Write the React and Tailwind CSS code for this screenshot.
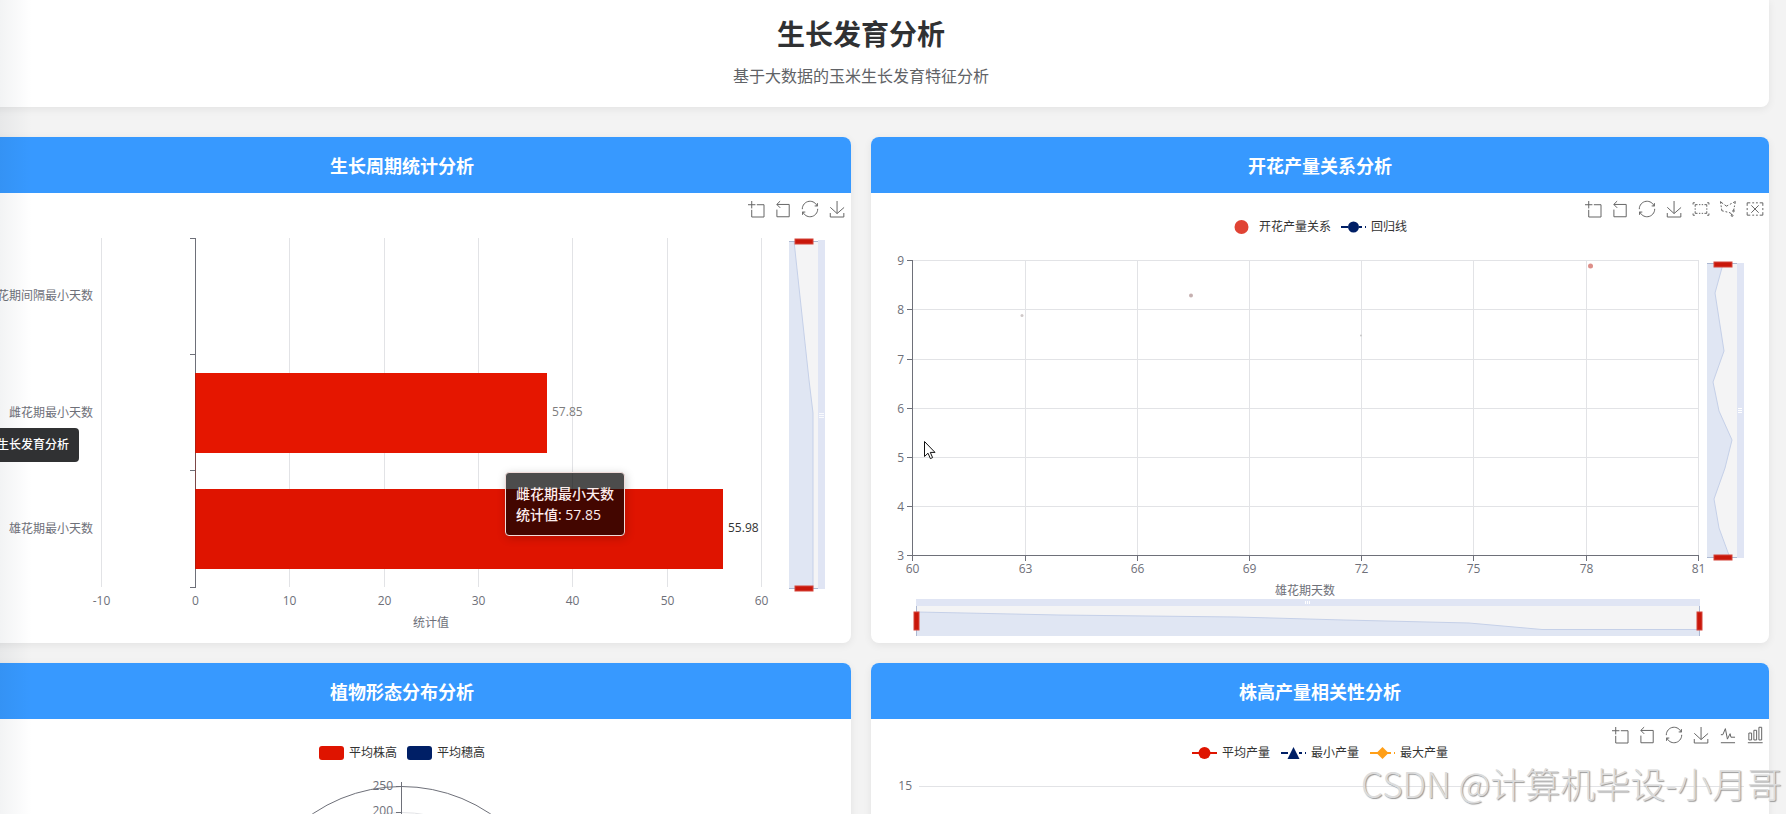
import React from 'react';

const FONT = 'font-["Open_Sans","Noto_Sans_CJK_SC",sans-serif]';

// Toolbox glyphs: viewBox + path
const TOOLS = {
  zoom: { label: '区域缩放', box: '0 0 58 58', d: 'M0,13.5h26.9 M13.5,26.9V0 M32.1,13.5H58V58H13.5 V32.1' },
  back: { label: '区域缩放还原', box: '3.4 1 58 58', d: 'M22,1.4L9.9,13.5l12.3,12.3 M10.3,13.5H54.9v44.6 H10.3v-26' },
  restore: { label: '还原', box: '1 1 58 58', d: 'M3.8,33.4 M47,18.9h9.8V8.7 M56.3,20.1 C52.1,9,40.5,0.6,26.8,2.1C12.6,3.7,1.6,16.2,2.1,30.6 M13,41.1H3.1v10.2 M3.7,39.9c4.2,11.1,15.8,19.5,29.5,18 c14.2-1.6,25.2-14.1,24.7-28.5' },
  save: { label: '保存为图片', box: '0 0 58 58', d: 'M4.7,22.9L29.3,45.5L54.7,23.4M4.6,43.6L4.6,58L53.8,58L53.8,43.6M29.2,45.1L29.2,0' },
  rect: { label: '矩形选择', box: '0 -0.2 90 70.4', d: 'M0.4,10V-0.2h9.8 M89.6,10V-0.2h-9.8 M0.4,60v10.2h9.8 M89.6,60v10.2h-9.8 M12.3,22.4V10.5h13.1 M33.6,10.5h7.8 M49.1,10.5h7.8 M77.5,22.4V10.5h-13 M12.3,31.1v8.2 M77.7,31.1v8.2 M12.3,47.6v11.9h13.1 M33.6,59.5h7.6 M49.1,59.5 h7.7 M77.5,47.6v11.9h-13' },
  polygon: { label: '圈选', box: '8 3 56 56', d: 'M55.2,34.9c1.7,0,3.1,1.4,3.1,3.1s-1.4,3.1-3.1,3.1 s-3.1-1.4-3.1-3.1S53.5,34.9,55.2,34.9z M50.4,51c1.7,0,3.1,1.4,3.1,3.1c0,1.7-1.4,3.1-3.1,3.1c-1.7,0-3.1-1.4-3.1-3.1 C47.3,52.4,48.7,51,50.4,51z M55.6,37.1l1.5-7.8 M60.1,13.5l1.6-8.7l-7.8,4 M59,19l-1,5.3 M24,16.1l6.4,4.9l6.4-3.3 M48.5,11.6 l-5.9,3.1 M19.1,12.8L9.7,5.1l1.1,7.7 M13.4,29.8l1,7.3l6.6,1.6 M11.6,18.4l1,6.1 M26.6,40.4 M27.3,40.2l6.1,1.6 M49.9,52.1l-5.6-7.6l-4.9-1.2' },
  clear: { label: '清除选择', box: '4 -1 67 62', d: 'M22,14.7l30.9,31 M52.9,14.7L22,45.7 M4.7,16.8V4.2h13.1 M26,4.2h7.8 M41.6,4.2h7.8 M70.3,16.8V4.2H57.2 M4.7,25.9v8.6 M70.3,25.9v8.6 M4.7,43.2v12.6h13.1 M26,55.8h7.8 M41.6,55.8h7.8 M70.3,43.2v12.6H57.2' },
  line: { label: '切换为折线图', box: '1 1 58 58', d: 'M4.1,28.9h7.1l9.3-22l7.4,38l9.7-19.7l3,12.8h14.9M4.1,58h51.4' },
  bar: { label: '切换为柱状图', box: '0 1 58 58', d: 'M6.7,22.9h10V48h-10V22.9zM24.9,13h10v35h-10V13zM43.2,2h10v46h-10V2zM3.1,58h53.7' },
};

const Toolbox = ({ items }) => (
  <div className="absolute top-2 right-1.5 flex gap-[11px]">
    {items.map(key => (
      <button key={key} type="button" aria-label={TOOLS[key].label} className="block">
        <svg viewBox={TOOLS[key].box} className="block w-4 h-4 overflow-visible" fill="none" stroke="#666">
          <path d={TOOLS[key].d} vectorEffect="non-scaling-stroke" />
        </svg>
      </button>
    ))}
  </div>
);

const Legend = ({ items, className }) => (
  <div className={`absolute inset-x-0 top-[26px] flex justify-center ${className}`}>
    {items.map(({ name, icon }) => (
      <button key={name} type="button" className="flex items-center gap-[5px] text-xs leading-4 text-[#333] whitespace-nowrap">
        <svg width="25" height="14" viewBox="0 0 25 14">{icon}</svg>
        {name}
      </button>
    ))}
  </div>
);

const Card = ({ title, children }) => (
  <section className="bg-white rounded-lg overflow-hidden shadow-[0_2px_8px_rgba(0,0,0,0.07)]">
    <h2 className="bg-[#3799ff] text-white text-lg font-bold leading-6 pt-[17px] pb-[15px] text-center">{title}</h2>
    <div className="relative">{children}</div>
  </section>
);

const Chart = ({ children, label }) => (
  <svg viewBox="0 0 898 450" role="img" aria-label={label} className="block w-full" fontSize="12" fill="#6E7079">
    {children}
  </svg>
);

const Handle = ({ x, y, vertical }) => (
  <rect x={x} y={y} width={vertical ? 5 : 18} height={vertical ? 18 : 5} fill="#c9170a" stroke="#d4443a" strokeWidth="1" />
);

const GrowthCycle = () => {
  const xTicks = [[-10, 148.5], [0, 242.5], [10, 336.5], [20, 431.5], [30, 525.5], [40, 619.5], [50, 714.5], [60, 808.5]];
  const rows = [['雌雄花期间隔最小天数', 107], ['雌花期最小天数', 224], ['雄花期最小天数', 340]];
  return (
    <>
      <Chart label="生长周期统计分析">
        {xTicks.map(([v, x]) => (
          <g key={v}>
            <line x1={x} x2={x} y1="45" y2="394" stroke={v === 0 ? '#6E7079' : '#e2e3e6'} />
            <text x={x} y="412" textAnchor="middle">{v}</text>
          </g>
        ))}
        {[45.5, 161.5, 277.5, 394.5].map(y => <line key={y} x1="237" x2="243" y1={y} y2={y} stroke="#6E7079" />)}
        {rows.map(([name, y]) => <text key={name} x="140" y={y} textAnchor="end">{name}</text>)}
        <rect x="242" y="180" width="352" height="80" fill="#e51600" />
        <rect x="242" y="296" width="528" height="80" fill="#df1400" />
        <line x1="242.5" x2="242.5" y1="180" y2="376" stroke="#8a2015" strokeOpacity="0.5" />
        <text x="599" y="223" fill="#7d7d7d">57.85</text>
        <text x="775" y="339" fill="#333">55.98</text>
        <text x="478" y="434" textAnchor="middle">统计值</text>

        {/* Data zoom */}
        <rect x="836" y="48" width="29" height="348" fill="#f4f4f5" />
        <path d="M836,48 H841 L856,187 L860,220 V396 H836 Z" fill="#e0e6f3" />
        <path d="M841,48 L856,187 L860,220 V396" fill="none" stroke="#c5d0e8" />
        <rect x="865" y="47" width="7" height="349" fill="#e0e5f4" />
        <path d="M866,220.5h5 M866,222.5h5 M866,224.5h5" stroke="#fff" strokeWidth="1" strokeOpacity="0.8" />
        <path d="M836,48.5h29 M836,395.5h29" stroke="#acb8d1" />
        <Handle x={842} y={46} />
        <Handle x={842} y={393} />
      </Chart>
      <Toolbox items={['zoom', 'back', 'restore', 'save']} />
      {/* Tooltip */}
      <div className="absolute left-[552px] top-[279px] p-[10px] rounded border border-[#f0dcda] bg-black/70 text-[#fdeeee] text-sm leading-[21px] whitespace-nowrap shadow-[1px_2px_10px_rgba(0,0,0,0.2)] font-medium">
        雌花期最小天数<br />统计值: 57.85
      </div>
    </>
  );
};

const FloweringYield = () => {
  const xTicks = [[60, 41.5], [63, 154.5], [66, 266.5], [69, 378.5], [72, 490.5], [75, 602.5], [78, 715.5], [81, 827.5]];
  const yTicks = [[9, 67.5], [8, 116.5], [7, 166.5], [6, 215.5], [5, 264.5], [4, 313.5], [3, 362.5]];
  const wave = 'M852,71 L844,100 L853,158 L842,189 L848,218 L861,247 L854,275 L843,306 L848,335 L859,365';
  const slope = 'M46,419 L188,422 L365,424 L473,427 L598,430 L671,436.5 H829';
  return (
    <>
      <Chart label="开花产量关系分析">
        {xTicks.map(([v, x]) => (
          <g key={v}>
            <line x1={x} x2={x} y1="67" y2="362" stroke="#e2e3e6" />
            <line x1={x} x2={x} y1="362" y2="368" stroke="#6E7079" />
            <text x={x} y="380" textAnchor="middle">{v}</text>
          </g>
        ))}
        {yTicks.map(([v, y]) => (
          <g key={v}>
            <line x1="41" x2="828" y1={y} y2={y} stroke="#e2e3e6" />
            <line x1="36" x2="42" y1={y} y2={y} stroke="#6E7079" />
            <text x="33" y={y + 4} textAnchor="end">{v}</text>
          </g>
        ))}
        <path d="M41.5,67V362.5H828" fill="none" stroke="#6E7079" />
        <circle cx="719.5" cy="73" r="2.5" fill="#dd8f89" />
        <circle cx="320" cy="102.5" r="2" fill="#c6b0b0" />
        <circle cx="151" cy="122.5" r="1.5" fill="#cfc8c8" />
        <circle cx="490" cy="142.5" r="1" fill="#c8c8c8" />
        <text x="434" y="402" textAnchor="middle">雄花期天数</text>

        {/* Vertical data zoom */}
        <rect x="836" y="70" width="30" height="295" fill="#f4f4f5" />
        <path d={`${wave} H836 V71 Z`} fill="#e0e6f3" />
        <path d={wave} fill="none" stroke="#c5d0e8" />
        <rect x="866" y="70" width="7" height="295" fill="#e0e5f4" />
        <path d="M867,215.5h4 M867,217.5h4 M867,219.5h4" stroke="#fff" />
        <path d="M836,70.5h30 M836,364.5h30" stroke="#acb8d1" />
        <Handle x={843} y={69} />
        <Handle x={843} y={362} />

        {/* Horizontal data zoom */}
        <rect x="45" y="413" width="784" height="30" fill="#f4f4f5" />
        <path d={`${slope} V443 H46 Z`} fill="#e0e6f3" />
        <path d={slope} fill="none" stroke="#c5d0e8" />
        <rect x="45" y="406" width="784" height="7" fill="#e0e5f4" />
        <path d="M434.5,408v3 M436.5,408v3 M438.5,408v3" stroke="#fff" />
        <path d="M45.5,413v30 M828.5,413v30" stroke="#acb8d1" />
        <Handle x={43} y={419} vertical />
        <Handle x={826} y={419} vertical />
      </Chart>
      <Legend
        className="gap-[10px] pr-1"
        items={[
          { name: '开花产量关系', icon: <circle cx="12.5" cy="7" r="7" fill="#e04334" /> },
          {
            name: '回归线',
            icon: (
              <>
                <path d="M0,7h7 M18,7h3 M24,7h1" stroke="#001f66" strokeWidth="2" />
                <circle cx="12.5" cy="7" r="5.5" fill="#001f66" />
              </>
            ),
          },
        ]}
      />
      <Toolbox items={['zoom', 'back', 'restore', 'save', 'rect', 'polygon', 'clear']} />
    </>
  );
};

const PlantShape = () => (
  <>
    <Chart label="植物形态分布分析">
      <circle cx="448.5" cy="225.5" r="158" fill="none" stroke="#6E7079" />
      <circle cx="448.5" cy="225.5" r="132" fill="none" stroke="#e2e3e6" />
      <path d="M448.5,63V226 M443,67.5h6 M443,93.5h6" stroke="#6E7079" />
      <text x="440" y="71" textAnchor="end">250</text>
      <text x="440" y="96" textAnchor="end">200</text>
    </Chart>
    <Legend
      className="gap-[10px]"
      items={[
        { name: '平均株高', icon: <rect width="25" height="14" rx="3" fill="#df1400" /> },
        { name: '平均穗高', icon: <rect width="25" height="14" rx="3" fill="#001f66" /> },
      ]}
    />
  </>
);

const HeightYield = () => (
  <>
    <Chart label="株高产量相关性分析">
      <line x1="48" x2="873" y1="67.5" y2="67.5" stroke="#e2e3e6" />
      <text x="41" y="71" textAnchor="end">15</text>
    </Chart>
    <Legend
      className="gap-[11px]"
      items={[
        {
          name: '平均产量',
          icon: (
            <>
              <path d="M0,7h25" stroke="#df1400" strokeWidth="2" />
              <circle cx="12.5" cy="7" r="6" fill="#df1400" />
            </>
          ),
        },
        {
          name: '最小产量',
          icon: (
            <>
              <path d="M0,7h7 M18,7h3 M24,7h1" stroke="#001f66" strokeWidth="2" />
              <path d="M12.5,1L18.5,13H6.5Z" fill="#001f66" />
            </>
          ),
        },
        {
          name: '最大产量',
          icon: (
            <>
              <path d="M0,7h21 M24,7h1" stroke="#ff9f18" strokeWidth="2" />
              <path d="M12.5,1L18.5,7L12.5,13L6.5,7Z" fill="#ff9f18" />
            </>
          ),
        },
      ]}
    />
    <Toolbox items={['zoom', 'back', 'restore', 'save', 'line', 'bar']} />
  </>
);

const App = () => (
  <div className={`relative h-screen overflow-hidden bg-[#f3f3f3] ${FONT}`}>
    <main className="-ml-[47px] mr-[17px]">
      <header className="bg-white rounded-b-lg pt-4 pb-[19px] text-center shadow-[0_2px_8px_rgba(0,0,0,0.07)]">
        <h1 className="text-[28px] leading-9 font-bold text-[#303133]">生长发育分析</h1>
        <p className="mt-3 text-base leading-6 text-[#606266]">基于大数据的玉米生长发育特征分析</p>
      </header>

      <div className="grid grid-cols-2 gap-5 mt-[30px]">
        <Card title="生长周期统计分析"><GrowthCycle /></Card>
        <Card title="开花产量关系分析"><FloweringYield /></Card>
        <Card title="植物形态分布分析"><PlantShape /></Card>
        <Card title="株高产量相关性分析"><HeightYield /></Card>
      </div>
    </main>

    {/* Sidebar shadow */}
    <div className="absolute inset-y-0 left-0 w-8 bg-linear-to-r from-[#001529]/5 to-transparent pointer-events-none" />

    {/* Menu tooltip */}
    <div role="tooltip" className="absolute top-[428px] -left-[13px] px-[10px] py-2 rounded bg-[#303133] text-white text-xs leading-[18px] font-medium">
      生长发育分析
    </div>

    {/* Cursor */}
    <svg className="absolute left-[923px] top-[440px] w-3 h-5 overflow-visible" viewBox="0 0 12 20">
      <path d="M1.5,1.5V16.5L5,13.2L7.4,18.6L9.6,17.6L7.3,12.4H12Z" fill="#fff" stroke="#111" />
    </svg>

    <div className="absolute right-1 bottom-1.5 text-[35px] leading-[50px] font-light font-['Noto_Sans_CJK_SC',sans-serif] text-[#dcdcdc] [text-shadow:1px_1px_1px_#999] whitespace-nowrap">
      CSDN @计算机毕设-小月哥
    </div>
  </div>
);

export default App;
